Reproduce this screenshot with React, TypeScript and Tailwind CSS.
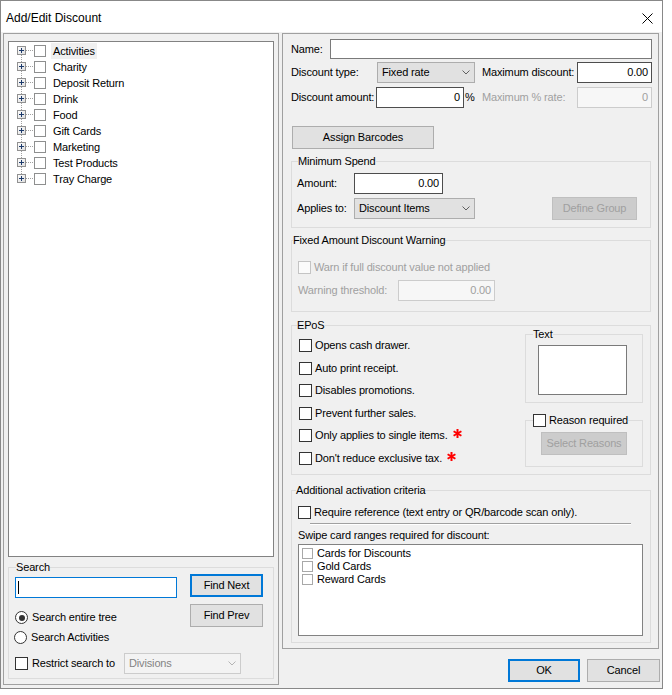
import React from 'react';

const F = "font-['Liberation_Sans',Arial,sans-serif] text-[11px] leading-[13px] tracking-[-0.15px] text-black";

const Check = ({ tone = 'dark' }: { tone?: 'dark' | 'tree' | 'disabled' | 'list' }) => {
  if (tone === 'tree') return <span className="block w-[12px] h-[12px] border border-[#8e8f8f] bg-white shrink-0" />;
  if (tone === 'list') return <span className="block w-[11px] h-[11px] border border-[#a8a8a8] bg-white shrink-0" />;
  if (tone === 'disabled') return <span className="block w-[13px] h-[13px] border border-[#c4c4c4] bg-[#fbfbfb] shrink-0" />;
  return <span className="block w-[13px] h-[13px] border border-[#333333] bg-white shrink-0" />;
};

const Radio = ({ checked }: { checked?: boolean }) => (
  <span className="flex items-center justify-center w-[13px] h-[13px] rounded-full border border-[#333333] bg-white shrink-0">
    {checked && <span className="block w-[6px] h-[6px] rounded-full bg-[#333333]" />}
  </span>
);

const Chevron = ({ color = '#606060' }: { color?: string }) => (
  <svg width="8" height="5" viewBox="0 0 8 5" className="shrink-0">
    <polyline points="0.5,0.5 4,4 7.5,0.5" fill="none" stroke={color} strokeWidth="1" />
  </svg>
);

const Asterisk = () => (
  <svg width="9" height="9" viewBox="0 0 9 9" className="shrink-0 self-start">
    <g stroke="#ff0000" strokeWidth="2" strokeLinecap="butt">
      <line x1="4.5" y1="0" x2="4.5" y2="9" />
      <line x1="0.6" y1="2.25" x2="8.4" y2="6.75" />
      <line x1="0.6" y1="6.75" x2="8.4" y2="2.25" />
    </g>
  </svg>
);

// tree expander + dotted connector lines
const TreeLines = ({ first, last }: { first?: boolean; last?: boolean }) => (
  <svg width="25" height="16" viewBox="0 0 25 16" className="shrink-0">
    <g stroke="#a0a0a0" strokeWidth="1" strokeDasharray="1 1">
      {!first && <line x1="12.5" y1="0" x2="12.5" y2="3" />}
      {!last && <line x1="12.5" y1="12" x2="12.5" y2="16" />}
      <line x1="17" y1="7.5" x2="25" y2="7.5" />
    </g>
    <defs>
      <linearGradient id="pb" x1="0" y1="0" x2="1" y2="1">
        <stop offset="0" stopColor="#ffffff" />
        <stop offset="1" stopColor="#dcdcdc" />
      </linearGradient>
    </defs>
    <rect x="8.5" y="3.5" width="8" height="8" fill="url(#pb)" stroke="#919191" />
    <line x1="10" y1="7.5" x2="15" y2="7.5" stroke="#1c3a6b" />
    <line x1="12.5" y1="5" x2="12.5" y2="10" stroke="#1c3a6b" />
  </svg>
);

const Btn = ({ label, w, disabled, focused }: { label: string; w: string; disabled?: boolean; focused?: boolean }) => (
  <div
    className={
      'flex items-center justify-center h-[23px] shrink-0 ' +
      w +
      (disabled
        ? ' bg-[#cccccc] border border-[#bfbfbf] text-[#a0a0a0]'
        : focused
        ? ' bg-[#e1e1e1] border-2 border-[#0078d7]'
        : ' bg-[#e1e1e1] border border-[#adadad]')
    }
  >
    {label}
  </div>
);

const Field = ({ w, value, dark, disabled }: { w: string; value?: string; dark?: boolean; disabled?: boolean }) => (
  <div
    className={
      'flex items-center justify-end pr-[3px] h-[21px] shrink-0 ' +
      w +
      (disabled
        ? ' bg-[#f7f7f7] border border-[#cccccc] text-[#a0a0a0]'
        : dark
        ? ' bg-white border border-[#4d4d4d]'
        : ' bg-white border border-[#7a7a7a]')
    }
  >
    {value}
  </div>
);

const Combo = ({ w, value, disabled }: { w: string; value: string; disabled?: boolean }) => (
  <div
    className={
      'flex items-center justify-between pl-[4px] pr-[4px] h-[21px] shrink-0 ' +
      w +
      (disabled ? ' bg-[#f3f3f3] border border-[#cccccc] text-[#838383]' : ' bg-[#e1e1e1] border border-[#adadad]')
    }
  >
    <span>{value}</span>
    <Chevron color={disabled ? '#b4b4b4' : '#606060'} />
  </div>
);

const treeItems = ['Activities', 'Charity', 'Deposit Return', 'Drink', 'Food', 'Gift Cards', 'Marketing', 'Test Products', 'Tray Charge'];

const eposChecks = [
  { label: 'Opens cash drawer.' },
  { label: 'Auto print receipt.' },
  { label: 'Disables promotions.' },
  { label: 'Prevent further sales.' },
  { label: 'Only applies to single items.', star: true },
  { label: "Don't reduce exclusive tax.", star: true },
];

export default function App() {
  return (
    <div className={'w-[672px] h-[695px] bg-white ' + F}>
      <div className="w-[663px] h-[689px] border border-[#888888] bg-[#f0f0f0] flex flex-col">
        {/* title bar */}
        <div className="h-[31px] bg-white flex items-center justify-between pl-[5px] pr-[9px] pt-[3px] shrink-0">
          <span className="text-[12px] tracking-normal">Add/Edit Discount</span>
          <svg width="11" height="11" viewBox="0 0 11 11">
            <line x1="0.5" y1="0.5" x2="10.5" y2="10.5" stroke="#000" strokeWidth="1" />
            <line x1="10.5" y1="0.5" x2="0.5" y2="10.5" stroke="#000" strokeWidth="1" />
          </svg>
        </div>

        <div className="flex items-start pl-[2px] mt-[1px]">
          {/* left panel */}
          <div className="w-[276px] h-[652px] border border-[#a0a0a0] pl-[4px] pt-[7px] flex flex-col shrink-0">
            <div className="w-[266px] h-[516px] border border-[#828282] bg-white pt-[1px]">
              {treeItems.map((t, i) => (
                <div key={t} className="flex items-center h-[16px]">
                  <TreeLines first={i === 0} last={i === treeItems.length - 1} />
                  <Check tone="tree" />
                  <span className={'ml-[5px] px-[2px] h-[16px] flex items-center ' + (i === 0 ? 'bg-[#f0f0f0]' : '')}>{t}</span>
                </div>
              ))}
            </div>

            <fieldset className="w-[266px] h-[118px] mt-[4px] border border-[#dcdcdc] pl-[6px]">
              <legend className="ml-[1px] px-0">Search</legend>
              <div className="flex items-start">
                <div className="w-[162px] h-[21px] mt-[3px] bg-white border border-[#0078d7] flex items-center pl-[2px]">
                  <span className="block w-px h-[13px] bg-black" />
                </div>
                <div className="ml-[13px]">
                  <Btn label="Find Next" w="w-[73px]" focused />
                </div>
              </div>
              <div className="flex items-start mt-[6px]">
                <div className="w-[175px] pt-[7px] flex items-center">
                  <Radio checked />
                  <span className="ml-[4px]">Search entire tree</span>
                </div>
                <Btn label="Find Prev" w="w-[73px]" />
              </div>
              <div className="flex items-center mt-[4px] ml-[-1px]">
                <Radio />
                <span className="ml-[4px]">Search Activities</span>
              </div>
              <div className="flex items-center mt-[9px]">
                <Check />
                <span className="ml-[4px] w-[92px]">Restrict search to</span>
                <Combo w="w-[117px]" value="Divisions" disabled />
              </div>
            </fieldset>
          </div>

          {/* right column */}
          <div className="w-[378px] ml-[3px] flex flex-col shrink-0">
            <div className="w-[377px] h-[616px] border border-[#a0a0a0] pl-[8px] pt-[5px] flex flex-col">
              <div className="flex items-center h-[20px]">
                <span className="w-[39px]">Name:</span>
                <div className="w-[322px] h-[20px] bg-white border border-[#7a7a7a]" />
              </div>
              <div className="flex items-center mt-[3px]">
                <span className="w-[86px]">Discount type:</span>
                <Combo w="w-[98px]" value="Fixed rate" />
                <span className="w-[95px] ml-[7px]">Maximum discount:</span>
                <Field w="w-[75px]" value="0.00" dark />
              </div>
              <div className="flex items-center mt-[4px]">
                <span className="w-[85px]">Discount amount:</span>
                <Field w="w-[88px]" value="0" dark />
                <span className="w-[18px] pl-[1px]">%</span>
                <span className="w-[95px] text-[#a0a0a0]">Maximum % rate:</span>
                <Field w="w-[75px]" value="0" disabled />
              </div>
              <div className="mt-[18px] ml-[1px]">
                <Btn label="Assign Barcodes" w="w-[142px]" />
              </div>

              <fieldset className="w-[360px] h-[73px] mt-[6px] border border-[#dcdcdc] pl-[5px] shrink-0">
                <legend className="ml-[1px] px-0">Minimum Spend</legend>
                <div className="flex items-center mt-[5px]">
                  <span className="w-[57px]">Amount:</span>
                  <Field w="w-[89px]" value="0.00" dark />
                </div>
                <div className="flex items-center mt-[3px] pr-[13px]">
                  <span className="w-[57px]">Applies to:</span>
                  <Combo w="w-[121px]" value="Discount Items" />
                  <div className="ml-auto">
                    <Btn label="Define Group" w="w-[85px]" disabled />
                  </div>
                </div>
              </fieldset>

              <fieldset className="w-[360px] h-[78px] mt-[6px] border border-[#dcdcdc] pl-[6px] shrink-0">
                <legend className="ml-[-5px] px-0">Fixed Amount Discount Warning</legend>
                <div className="flex items-center mt-[14px] text-[#a0a0a0]">
                  <Check tone="disabled" />
                  <span className="ml-[3px]">Warn if full discount value not applied</span>
                </div>
                <div className="flex items-center mt-[6px] text-[#a0a0a0]">
                  <span className="w-[100px]">Warning threshold:</span>
                  <Field w="w-[97px]" value="0.00" disabled />
                </div>
              </fieldset>

              <fieldset className="w-[360px] h-[156px] mt-[7px] border border-[#dcdcdc] shrink-0">
                <legend className="ml-[5px] px-0">EPoS</legend>
                <div className="flex items-start">
                  <div className="flex flex-col gap-[9.6px] pl-[7px] mt-[7px]">
                    {eposChecks.map((c) => (
                      <div key={c.label} className="flex items-center h-[13px]">
                        <Check />
                        <span className="ml-[3px]">{c.label}</span>
                        {c.star && (
                          <span className="ml-[5px] self-start">
                            <Asterisk />
                          </span>
                        )}
                      </div>
                    ))}
                  </div>
                  <div className="ml-auto mr-[7px] mt-[-4px] w-[118px] flex flex-col">
                    <fieldset className="w-[118px] h-[75px] border border-[#dcdcdc]">
                      <legend className="ml-[7px] px-0">Text</legend>
                      <div className="ml-[12px] mt-[4px] w-[89px] h-[50px] bg-white border border-[#7a7a7a]" />
                    </fieldset>
                    <fieldset className="w-[118px] h-[53px] mt-[11px] border border-[#dcdcdc]">
                      <legend className="ml-[7px] px-0">
                        <span className="flex items-center">
                          <Check />
                          <span className="ml-[3px]">Reason required</span>
                        </span>
                      </legend>
                      <div className="ml-[15px] mt-[5px]">
                        <Btn label="Select Reasons" w="w-[86px]" disabled />
                      </div>
                    </fieldset>
                  </div>
                </div>
              </fieldset>

              <fieldset className="w-[360px] h-[159px] mt-[9px] border border-[#dcdcdc] pl-[6px] shrink-0">
                <legend className="ml-[-2px] px-0">Additional activation criteria</legend>
                <div className="flex items-center mt-[9px]">
                  <Check />
                  <span className="ml-[3px]">Require reference (text entry or QR/barcode scan only).</span>
                </div>
                <div className="ml-[12px] mt-[4px] w-[321px] border-t border-b border-t-[#a0a0a0] border-b-white" />
                <div className="mt-[4px]">Swipe card ranges required for discount:</div>
                <div className="mt-[2px] w-[345px] h-[92px] bg-white border border-[#828282] pl-[3px] pt-[2px]">
                  {['Cards for Discounts', 'Gold Cards', 'Reward Cards'].map((c) => (
                    <div key={c} className="flex items-center h-[13px]">
                      <Check tone="list" />
                      <span className="ml-[4px]">{c}</span>
                    </div>
                  ))}
                </div>
              </fieldset>
            </div>

            <div className="flex justify-end gap-[7px] mt-[10px]">
              <Btn label="OK" w="w-[72px]" focused />
              <Btn label="Cancel" w="w-[73px]" />
            </div>
          </div>
        </div>
      </div>
    </div>
  );
}
